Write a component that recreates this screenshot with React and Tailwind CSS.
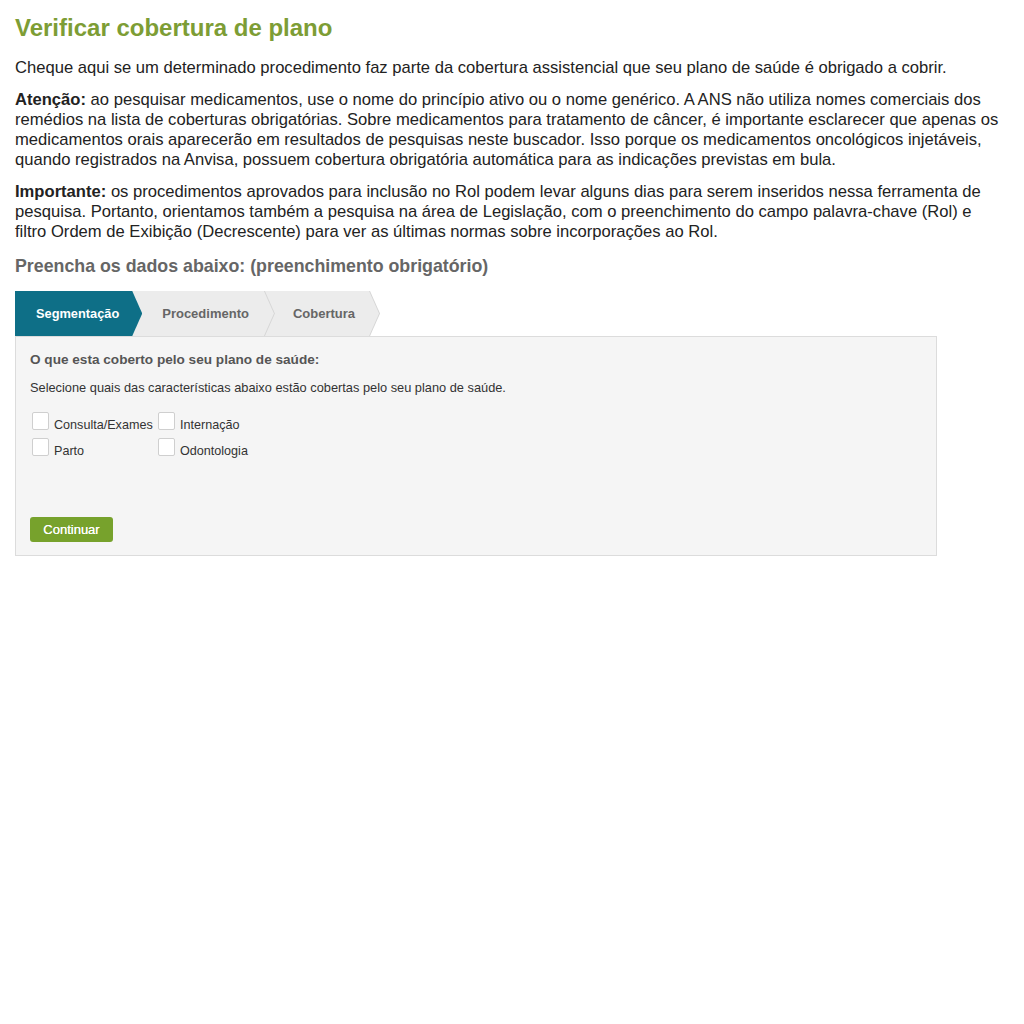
import React from "react";

function Check({ label }) {
  return (
    <label className="flex items-start">
      <span className="h-[18px] w-[17px] shrink-0 rounded-[2px] border border-[#cfcfcf] bg-white"></span>
      <span className="ml-[5px] mt-[5px] text-[12.6px] leading-[16px] text-[#333]">{label}</span>
    </label>
  );
}

export default function App() {
  return (
    <div className="min-h-[1024px] bg-white pl-[15px] pr-[20px] pt-[14px] font-['Liberation_Sans',Arial,sans-serif] text-[#222]">
      <h1 className="text-[24px] font-bold leading-[28px] text-[#7d9d35]">Verificar cobertura de plano</h1>
      <p className="mt-[16px] text-[16.6px] leading-[20px]">
        Cheque aqui se um determinado procedimento faz parte da cobertura assistencial que seu plano de saúde é obrigado a cobrir.
      </p>
      <p className="mt-[12px] text-[16.6px] leading-[20px]">
        <span className="font-bold">Atenção:</span> ao pesquisar medicamentos, use o nome do princípio ativo ou o nome genérico. A ANS não utiliza nomes comerciais dos remédios na lista de coberturas obrigatórias. Sobre medicamentos para tratamento de câncer, é importante esclarecer que apenas os medicamentos orais aparecerão em resultados de pesquisas neste buscador. Isso porque os medicamentos oncológicos injetáveis, quando registrados na Anvisa, possuem cobertura obrigatória automática para as indicações previstas em bula.
      </p>
      <p className="mt-[12px] text-[16.6px] leading-[20px]">
        <span className="font-bold">Importante:</span> os procedimentos aprovados para inclusão no Rol podem levar alguns dias para serem inseridos nessa ferramenta de pesquisa. Portanto, orientamos também a pesquisa na área de Legislação, com o preenchimento do campo palavra-chave (Rol) e filtro Ordem de Exibição (Decrescente) para ver as últimas normas sobre incorporações ao Rol.
      </p>
      <h2 className="mt-[13px] text-[17.8px] font-bold leading-[22px] text-[#666]">Preencha os dados abaixo: (preenchimento obrigatório)</h2>

      <div className="mt-[14px] flex h-[45px] w-[922px]">
        <div className="relative z-30 flex h-[45px] items-center bg-[#0e6f87] pl-[21px] pr-[23px] text-[12.8px] font-bold text-white [clip-path:polygon(0_0,calc(100%-10px)_0,100%_50%,calc(100%-10px)_100%,0_100%)]">
          Segmentação
        </div>
        <div className="relative z-20 -ml-[10px] h-[45px] bg-[#d6d6d6] [clip-path:polygon(0_0,calc(100%-10px)_0,100%_50%,calc(100%-10px)_100%,0_100%)]">
          <div className="flex h-full items-center bg-[#ececec] pl-[30px] pr-[26px] text-[13px] font-bold text-[#666] [clip-path:polygon(0_0,calc(100%-11px)_0,calc(100%-1px)_50%,calc(100%-11px)_100%,0_100%)]">
            Procedimento
          </div>
        </div>
        <div className="relative z-10 -ml-[10px] h-[45px] bg-[#d6d6d6] [clip-path:polygon(0_0,calc(100%-10px)_0,100%_50%,calc(100%-10px)_100%,0_100%)]">
          <div className="flex h-full items-center bg-[#ececec] pl-[28px] pr-[25px] text-[13px] font-bold text-[#666] [clip-path:polygon(0_0,calc(100%-11px)_0,calc(100%-1px)_50%,calc(100%-11px)_100%,0_100%)]">
            Cobertura
          </div>
        </div>
      </div>

      <div className="w-[922px] border border-[#dcdcdc] bg-[#f5f5f5] px-[14px] pb-[13px] pt-[15px]">
        <div className="text-[13.6px] font-bold leading-[16px] text-[#555]">O que esta coberto pelo seu plano de saúde:</div>
        <div className="mt-[12px] text-[12.8px] leading-[16px] text-[#333]">
          Selecione quais das características abaixo estão cobertas pelo seu plano de saúde.
        </div>
        <div className="ml-[2px] mt-[16px] grid w-[230px] grid-cols-[126px_1fr] gap-y-[5px]">
          <Check label="Consulta/Exames" />
          <Check label="Internação" />
          <Check label="Parto" />
          <Check label="Odontologia" />
        </div>
        <button className="mt-[58px] flex h-[25px] w-[83px] items-center justify-center rounded-[3px] bg-[#77a22c] text-[13px] text-white [text-shadow:0_0_0.5px_#fff]">
          Continuar
        </button>
      </div>
    </div>
  );
}
